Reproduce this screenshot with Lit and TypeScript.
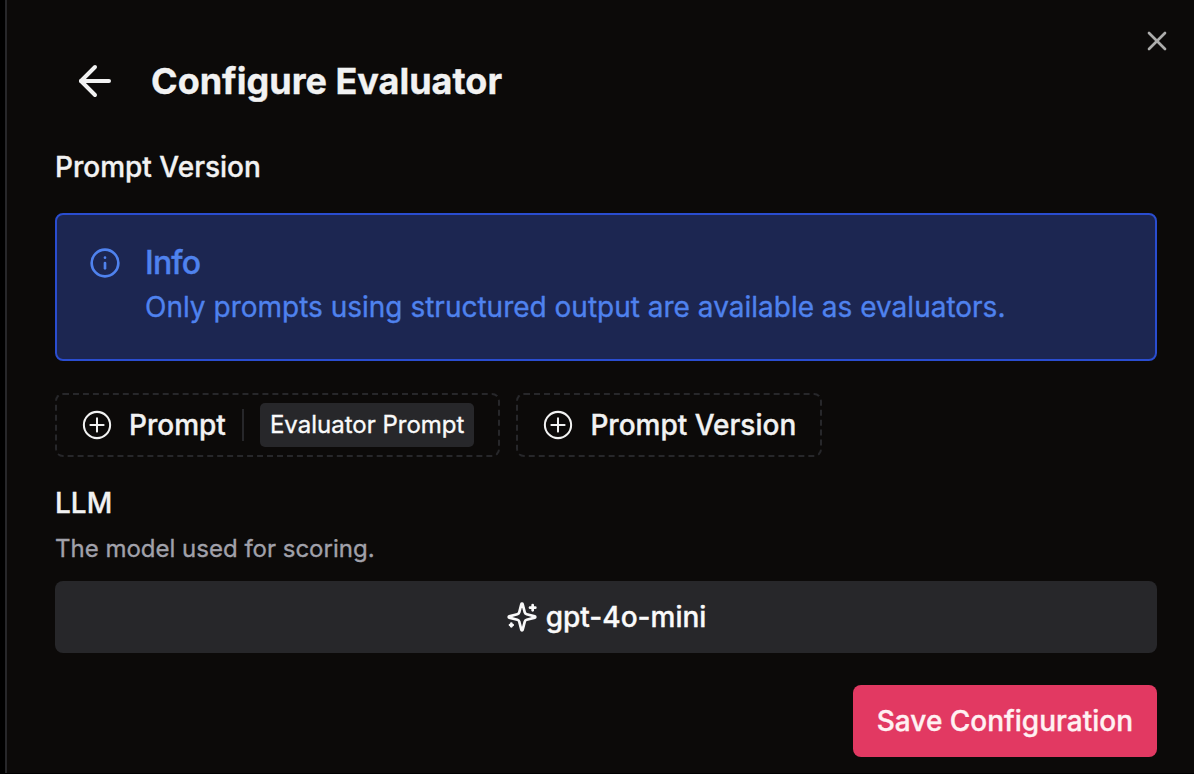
import { LitElement, html, css, svg } from "lit";
import { customElement } from "lit/decorators.js";

const lucide = (cls: string, body: unknown) => html`
  <svg class=${cls} viewBox="0 0 24 24" fill="none" stroke="currentColor" stroke-width="2"
    stroke-linecap="round" stroke-linejoin="round" aria-hidden="true">${body}</svg>`;

const arrowLeft = svg`<path d="m12 19-7-7 7-7"/><path d="M19 12H5"/>`;
const close = svg`<path d="M18 6 6 18"/><path d="m6 6 12 12"/>`;
const info = svg`<circle cx="12" cy="12" r="10"/><path d="M12 16v-4"/><path d="M12 8h.01"/>`;
const sparkles = svg`
  <path d="M9.937 15.5A2 2 0 0 0 8.5 14.063l-6.135-1.582a.5.5 0 0 1 0-.962L8.5 9.936A2 2 0 0 0 9.937 8.5l1.582-6.135a.5.5 0 0 1 .963 0L14.063 8.5A2 2 0 0 0 15.5 9.937l6.135 1.581a.5.5 0 0 1 0 .964L15.5 14.063a2 2 0 0 0-1.437 1.437l-1.582 6.135a.5.5 0 0 1-.963 0z"/>
  <path d="M20 3v4"/><path d="M22 5h-4"/><path d="M4 17v2"/><path d="M5 18H3"/>`;

const plusCircled = html`
  <svg class="icon" viewBox="0 0 15 15" fill="none" stroke="currentColor" stroke-width="0.95"
    stroke-linecap="round" aria-hidden="true">
    <circle cx="7.5" cy="7.5" r="6.15"/><path d="M7.5 4.4v6.2M4.4 7.5h6.2"/>
  </svg>`;

@customElement("app-root")
export class AppRoot extends LitElement {
  static styles = css`
    :host {
      display: block;
      height: 774px;
      padding-left: 5px;
      box-sizing: border-box;
      background: #000;
      color: #f2f2f2;
      font: 500 28px/40px Inter, sans-serif;
      -webkit-text-stroke: 0.35px currentColor;
      overflow: hidden;
    }
    * { box-sizing: border-box; }
    button { font: inherit; color: inherit; margin: 0; cursor: pointer; }
    svg { display: block; flex: none; }
    .icon { width: 32px; height: 32px; }
    .sheet {
      position: relative;
      height: 773px;
      border-left: 2px solid #27272a;
      background: #0c0a09;
      padding: 57px 37px 0 48px;
      display: flex;
      flex-direction: column;
    }
    .close {
      position: absolute;
      top: 25px;
      right: 21px;
      padding: 0;
      border: 0;
      background: none;
      color: #f2f2f2;
      opacity: 0.7;
    }
    .header { display: flex; align-items: center; gap: 32px; padding-left: 16px; height: 48px; }
    .back { padding: 0; border: 0; background: none; }
    .arrow { width: 48px; height: 48px; }
    .title { margin: 0; font-size: 36px; line-height: 48px; font-weight: 700; letter-spacing: 0; white-space: nowrap; }
    .label { margin: 0; font-size: 28px; font-weight: 500; line-height: 40px; }
    .version { margin-top: 42px; }
    .alert {
      margin-top: 26px;
      height: 148px;
      border: 2px solid #2a4dd0;
      border-radius: 8px;
      background: #1c2651;
      color: #4f82ee;
      padding: 32px;
      display: flex;
      gap: 24px;
    }
    .alert-title { margin: 0; font-size: 32px; line-height: 32px; font-weight: 500; letter-spacing: -0.8px; }
    .alert-text { margin: 8px 0 0; font-size: 28px; line-height: 40px; font-weight: 400; white-space: nowrap; }
    .filters { display: flex; gap: 16px; margin-top: 32px; }
    .chip {
      height: 64px;
      display: flex;
      align-items: center;
      border: 2px dashed #27272a;
      border-radius: 8px;
      background: none;
      padding: 0 24px;
      white-space: nowrap;
    }
    .chip .name { margin-left: 16px; }
    .divider { width: 2px; height: 32px; background: #27272a; margin: 0 16px; }
    .badge {
      height: 44px;
      border-radius: 5px;
      background: #27272a;
      color: #fafafa;
      padding: 0 10px;
      font-size: 24px;
      line-height: 44px;
      font-weight: 400;
    }
    .llm { margin-top: 26px; }
    .hint { margin: 10px 0 0; font-size: 24px; line-height: 32px; font-weight: 400; color: #a1a1aa; letter-spacing: 0; }
    .model {
      margin-top: 16px;
      height: 72px;
      border: 0;
      border-radius: 8px;
      background: #27272a;
      color: #fafafa;
      display: flex;
      align-items: center;
      justify-content: center;
      gap: 8px;
    }
    .save {
      margin-top: 32px;
      align-self: flex-end;
      height: 72px;
      padding: 0 24px;
      border: 0;
      border-radius: 8px;
      background: #e23962;
      color: #fff1f2;
      white-space: nowrap;
    }
  `;

  render() {
    return html`
      <section class="sheet">
        <header class="header">
          <button class="back" aria-label="Back">${lucide("arrow", arrowLeft)}</button>
          <h1 class="title">Configure Evaluator</h1>
        </header>
        <h2 class="label version">Prompt Version</h2>
        <div class="alert" role="note">
          ${lucide("icon", info)}
          <div>
            <h3 class="alert-title">Info</h3>
            <p class="alert-text">Only prompts using structured output are available as evaluators.</p>
          </div>
        </div>
        <div class="filters">
          <button class="chip">
            ${plusCircled}<span class="name">Prompt</span>
            <span class="divider"></span>
            <span class="badge">Evaluator Prompt</span>
          </button>
          <button class="chip">${plusCircled}<span class="name">Prompt Version</span></button>
        </div>
        <h2 class="label llm">LLM</h2>
        <p class="hint">The model used for scoring.</p>
        <button class="model">${lucide("icon", sparkles)}<span>gpt-4o-mini</span></button>
        <button class="save">Save Configuration</button>
        <button class="close" aria-label="Close">${lucide("icon", close)}</button>
      </section>
    `;
  }
}
